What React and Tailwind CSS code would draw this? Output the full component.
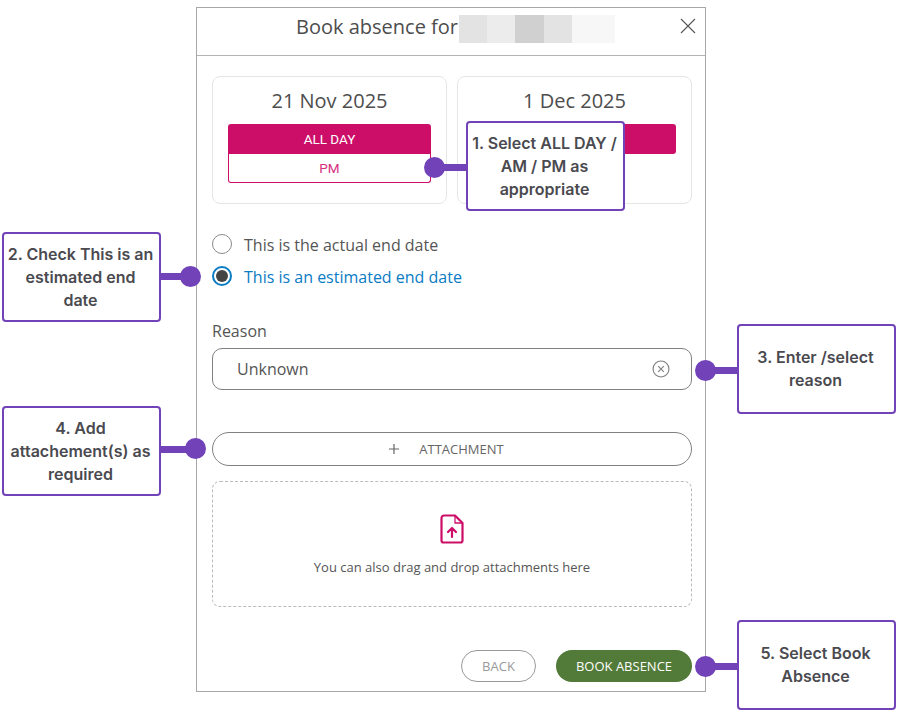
import React from "react";

const blurBlocks = [
  "w-[28px] bg-[#e3e3e3]",
  "w-[28px] bg-[#ececec]",
  "w-[29px] bg-[#d0d0d0]",
  "w-[28px] bg-[#e3e3e3]",
  "w-[43px] bg-[#f7f7f7]",
];

// Numbered annotation box, sits on top of the dialog
const Callout = ({ className, children }) => (
  <div
    className={`absolute w-[159px] h-[90px] pl-[1px] pr-[3px] flex items-center justify-center text-center bg-white border-2 border-[#7142b8] rounded-[4px] font-['Inter',sans-serif] font-semibold text-[16px] leading-[23px] text-[#4a4a50] ${className}`}
  >
    {children}
  </div>
);

const Dot = ({ className }) => (
  <div className={`absolute w-[21px] h-[21px] rounded-full bg-[#7142b8] ${className}`} />
);

const Line = ({ className }) => (
  <div className={`absolute h-[7px] bg-[#7142b8] ${className}`} />
);

const Radio = ({ checked, label }) => (
  <div className="flex items-center h-[20px] gap-[12px]">
    {checked ? (
      <span className="w-[20px] h-[20px] rounded-full border-2 border-[#0a7cc4] flex items-center justify-center">
        <span className="w-[12px] h-[12px] rounded-full bg-[#444444]" />
      </span>
    ) : (
      <span className="w-[20px] h-[20px] rounded-full border border-[#8a8a8a]" />
    )}
    <span className={`mt-[2px] text-[16px] ${checked ? "text-[#0a7cc4]" : "text-[#555555]"}`}>{label}</span>
  </div>
);

export default function App() {
  return (
    <div className="relative w-[898px] h-[712px] bg-white overflow-hidden font-['Open_Sans',sans-serif]">
      <div className="ml-[196px] pt-[7px]">
        <div className="w-[510px] h-[685px] border border-[#a8a8a8] flex flex-col">
          {/* Header */}
          <div className="relative h-[48px] shrink-0 border-b border-[#b4b4b4] flex items-start pt-[7px] pl-[99px]">
            <span className="mt-[2px] text-[20px] text-[#4d4d4d] leading-[20px]">Book absence for</span>
            <div className="flex h-[28px] ml-[1px]">
              {blurBlocks.map((c) => (
                <div key={c} className={c} />
              ))}
            </div>
            <svg className="absolute right-[9px] top-[10px] w-[16px] h-[16px]" viewBox="0 0 16 16" fill="none" stroke="#555" strokeWidth="1.1">
              <path d="M1 1l14 14M15 1L1 15" />
            </svg>
          </div>

          <div className="flex flex-col flex-1 pl-[15px] pr-[13px]">
            {/* Date cards */}
            <div className="flex gap-[10px] mt-[20px]">
              <div className="w-[235px] h-[128px] border border-[#e6e6e6] rounded-[8px] px-[15px] pt-[10px]">
                <div className="text-center text-[20px] leading-[28px] text-[#4d4d4d]">21 Nov 2025</div>
                <div className="mt-[9px] h-[30px] rounded-t-[3px] bg-[#cc0e69] text-white text-[13.5px] flex items-center justify-center font-['Roboto',sans-serif]">
                  ALL DAY
                </div>
                <div className="h-[29px] rounded-b-[3px] border border-t-0 border-[#cc0e69] text-[#d62f80] text-[13.5px] flex items-center justify-center font-['Roboto',sans-serif]">
                  PM
                </div>
              </div>
              <div className="w-[235px] h-[128px] border border-[#e6e6e6] rounded-[8px] px-[15px] pt-[10px]">
                <div className="text-center text-[20px] leading-[28px] text-[#4d4d4d]">1 Dec 2025</div>
                <div className="mt-[9px] h-[30px] rounded-[3px] bg-[#cc0e69]" />
              </div>
            </div>

            {/* End date radios */}
            <div className="flex flex-col gap-[12px] mt-[30px]">
              <Radio label="This is the actual end date" />
              <Radio checked label="This is an estimated end date" />
            </div>

            {/* Reason */}
            <label className="mt-[35px] text-[16px] leading-[20px] text-[#555555]">Reason</label>
            <div className="mt-[7px] h-[42px] border border-[#808080] rounded-[10px] flex items-center justify-between pl-[24px] pr-[21px]">
              <span className="text-[16px] text-[#555555]">Unknown</span>
              <svg className="w-[18px] h-[18px]" viewBox="0 0 19 19" fill="none" stroke="#808080" strokeWidth="1.2">
                <circle cx="9.5" cy="9.5" r="8.4" />
                <path d="M6.5 6.5l6 6M12.5 6.5l-6 6" />
              </svg>
            </div>

            {/* Attachments */}
            <div className="mt-[42px] h-[34px] border border-[#808080] rounded-full flex items-center justify-center gap-[20px] pr-[11px] text-[#666666]">
              <svg className="w-[10px] h-[10px]" viewBox="0 0 10 10" fill="none" stroke="#666" strokeWidth="1.2">
                <path d="M5 0v10M0 5h10" />
              </svg>
              <span className="pt-[1px] text-[13px]">ATTACHMENT</span>
            </div>
            <div className="mt-[15px] h-[126px] border border-dashed border-[#bbbbbb] rounded-[8px] flex flex-col items-center pt-[32px]">
              <svg className="w-[24px] h-[30px]" viewBox="0 0 24 30" fill="none" stroke="#cc0e69" strokeWidth="2.2" strokeLinejoin="round" strokeLinecap="round">
                <path d="M4 1.5h11l7.5 7.5v17.5a2 2 0 0 1-2 2H3.5a2 2 0 0 1-2-2V4a2.5 2.5 0 0 1 2.5-2.5z" />
                <path d="M15 1.5V9h7.5" strokeWidth="1.3" />
                <path d="M12 23v-9M8 18l4-4 4 4" />
              </svg>
              <div className="mt-[14px] text-[13px] leading-[18px] text-[#555555]">You can also drag and drop attachments here</div>
            </div>

            {/* Footer buttons */}
            <div className="mt-[43px] flex justify-end gap-[20px]">
              <div className="w-[75px] h-[32px] pt-[1px] border border-[#9a9a9a] rounded-full flex items-center justify-center text-[13px] text-[#999999]">
                BACK
              </div>
              <div className="w-[136px] h-[32px] pt-[1px] rounded-full bg-[#527a38] flex items-center justify-center text-[13px] font-medium text-white">
                BOOK ABSENCE
              </div>
            </div>
          </div>
        </div>
      </div>

      {/* Annotations */}
      <Line className="left-[435px] top-[164px] w-[32px]" />
      <Dot className="left-[424px] top-[157px]" />
      <Callout className="left-[466px] top-[121px]">
        <span>
          1. Select ALL DAY /
          <br />
          AM / PM as
          <br />
          appropriate
        </span>
      </Callout>

      <Line className="left-[160px] top-[273px] w-[30px]" />
      <Dot className="left-[180px] top-[266px]" />
      <Callout className="left-[2px] top-[232px]">
        <span>
          2. Check This is an
          <br />
          estimated end
          <br />
          date
        </span>
      </Callout>

      <Line className="left-[705px] top-[367px] w-[33px]" />
      <Dot className="left-[695px] top-[360px]" />
      <Callout className="left-[737px] top-[324px]">
        <span>
          3. Enter /select
          <br />
          reason
        </span>
      </Callout>

      <Line className="left-[160px] top-[446px] w-[36px]" />
      <Dot className="left-[185px] top-[438px]" />
      <Callout className="left-[2px] top-[406px]">
        <span>
          4. Add
          <br />
          attachement(s) as
          <br />
          required
        </span>
      </Callout>

      <Line className="left-[705px] top-[663px] w-[33px]" />
      <Dot className="left-[695px] top-[656px]" />
      <Callout className="left-[737px] top-[620px]">
        <span>
          5. Select Book
          <br />
          Absence
        </span>
      </Callout>
    </div>
  );
}
